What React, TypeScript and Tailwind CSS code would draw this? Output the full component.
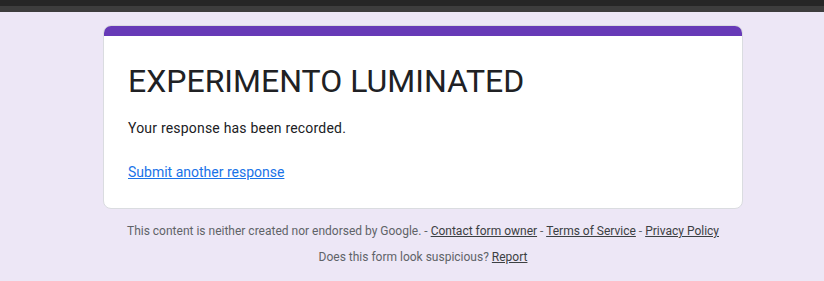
export default function App() {
  return (
    <div className="min-h-[281px] bg-[#ede7f6] font-['Roboto',sans-serif]">
      <div className="h-[6px] bg-[#262626]" />
      <div className="h-[6px] bg-[#3d3d3d]" />
      <div className="pl-[22px] pt-[13px]">
        <div className="mx-auto w-[640px]">
          <div className="rounded-lg border border-[#dadce0] bg-white overflow-hidden">
            <div className="h-[10px] bg-[#673ab7]" />
            <div className="px-6 pt-[25px] pb-6">
              <h1 className="text-[32px] leading-[40px] text-[#202124]">EXPERIMENTO LUMINATED</h1>
              <p className="mt-[17px] text-[14px] leading-5 tracking-[0.2px] text-[#202124]">
                Your response has been recorded.
              </p>
              <a href="#" className="mt-6 inline-block text-[14px] leading-5 text-[#1a73e8] underline">
                Submit another response
              </a>
            </div>
          </div>
          <div className="mt-[14px] text-center text-[12px] leading-4 text-[#5f6368]">
            <p>
              This content is neither created nor endorsed by Google. -{" "}
              <a href="#" className="underline text-[#3c4043]">Contact form owner</a> -{" "}
              <a href="#" className="underline text-[#3c4043]">Terms of Service</a> -{" "}
              <a href="#" className="underline text-[#3c4043]">Privacy Policy</a>
            </p>
            <p className="mt-[10px]">
              Does this form look suspicious? <a href="#" className="underline text-[#3c4043]">Report</a>
            </p>
          </div>
        </div>
      </div>
    </div>
  );
}
